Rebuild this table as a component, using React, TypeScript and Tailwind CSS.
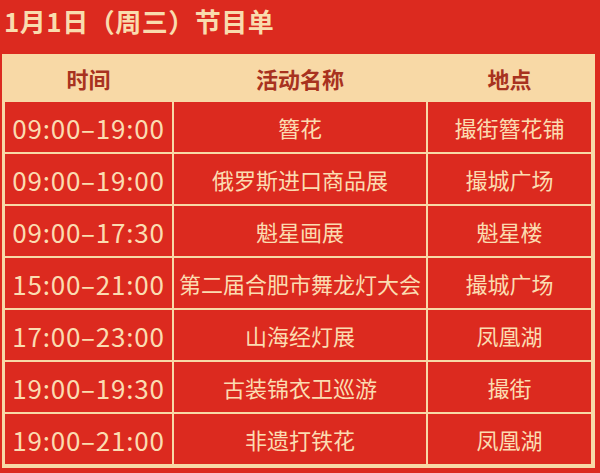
const ROWS = [
  ["09:00-19:00", "簪花", "撮街簪花铺"],
  ["09:00-19:00", "俄罗斯进口商品展", "撮城广场"],
  ["09:00-17:30", "魁星画展", "魁星楼"],
  ["15:00-21:00", "第二届合肥市舞龙灯大会", "撮城广场"],
  ["17:00-23:00", "山海经灯展", "凤凰湖"],
  ["19:00-19:30", "古装锦衣卫巡游", "撮街"],
  ["19:00-21:00", "非遗打铁花", "凤凰湖"],
];

const App = () => {
  return (
    <div
      className="w-[600px] h-[473px] bg-[#dc2a1f] overflow-hidden"
      style={{ fontFamily: '"Noto Sans CJK SC", "Noto Sans", sans-serif' }}
    >
      <div className="h-[54px] pl-[4px] pt-[4px] text-[26px] leading-[34px] font-bold text-[#f9dcae] tracking-[0.5px]">
        1月1日（周三）节目单
      </div>
      <div className="ml-[2px] w-[593px] bg-[#f8d9a6] pl-[3px] pr-[4px] pb-[4px]">
        <div className="grid grid-cols-[167px_252px_163px] h-[48px] items-center text-center text-[22px] font-bold text-[#a8321f] gap-x-[2px]">
          <div>时间</div>
          <div>活动名称</div>
          <div>地点</div>
        </div>
        <div className="grid grid-cols-[167px_252px_163px] gap-[2px]">
          {ROWS.map((row, i) => (
            <div key={i} className="contents">
              <div className="h-[50px] bg-[#dc2a1f] flex items-center justify-center text-[26px] text-[#fbdcb1] tracking-[0.8px]">
                {row[0].replace("-", "–")}
              </div>
              <div className="h-[50px] bg-[#dc2a1f] flex items-center justify-center text-[22px] text-[#fbdcb1] whitespace-nowrap">
                {row[1]}
              </div>
              <div className="h-[50px] bg-[#dc2a1f] flex items-center justify-center text-[22px] text-[#fbdcb1]">
                {row[2]}
              </div>
            </div>
          ))}
        </div>
      </div>
    </div>
  );
};

export default App;
